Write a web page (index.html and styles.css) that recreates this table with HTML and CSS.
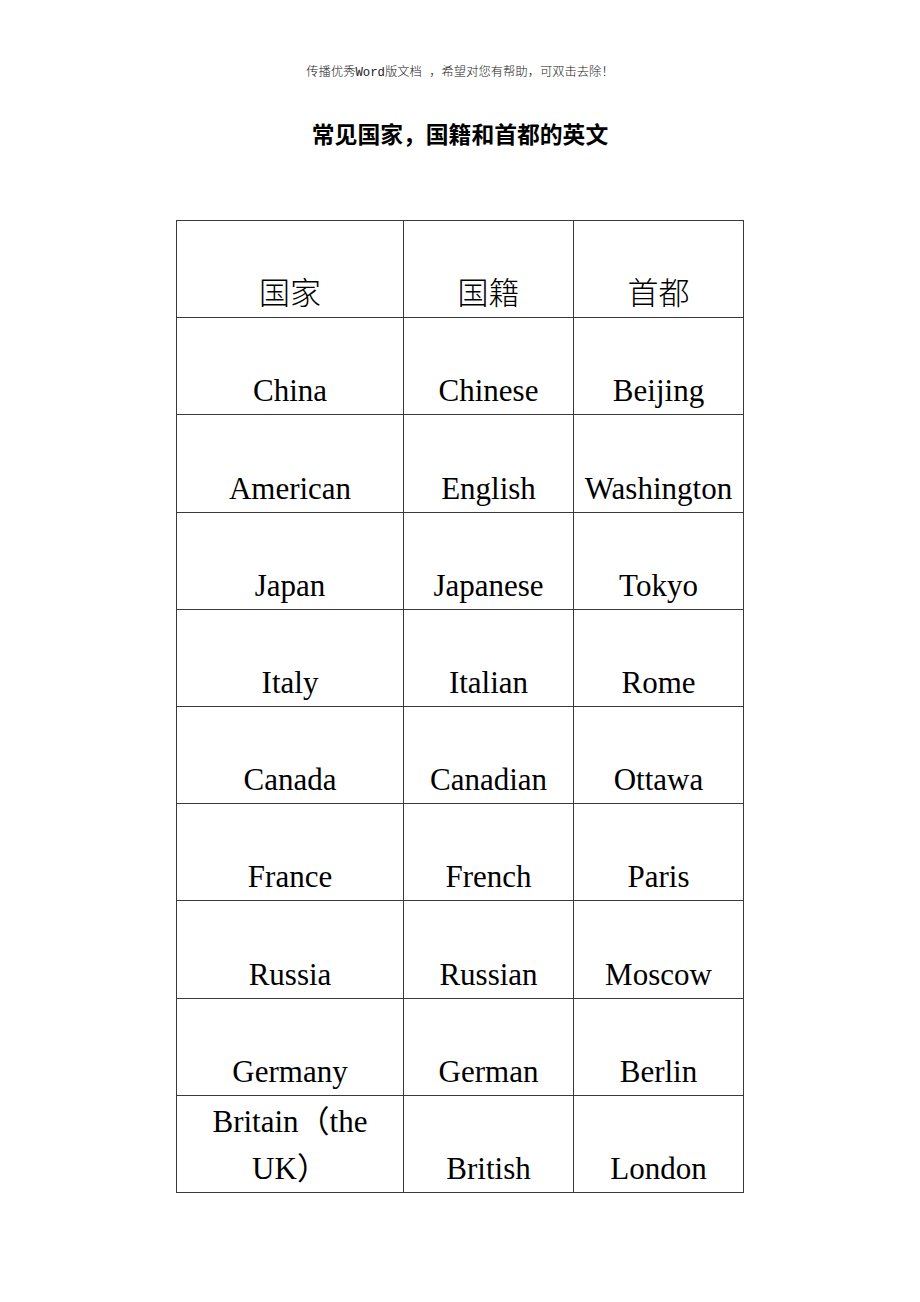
FILE: index.html
```html
<!DOCTYPE html>
<html lang="zh">
<head>
<meta charset="utf-8">
<title>常见国家，国籍和首都的英文</title>
<link rel="stylesheet" href="styles.css">
</head>
<body>
<div class="page">
  <p class="note">传播优秀Word版文档 ，希望对您有帮助，可双击去除！</p>
  <h1 class="title">常见国家，国籍和首都的英文</h1>
  <table class="grid">
    <colgroup>
      <col class="c1"><col class="c2"><col class="c3">
    </colgroup>
    <tbody>
      <tr><td>国家</td><td>国籍</td><td>首都</td></tr>
      <tr><td>China</td><td>Chinese</td><td>Beijing</td></tr>
      <tr><td>American</td><td>English</td><td>Washington</td></tr>
      <tr><td>Japan</td><td>Japanese</td><td>Tokyo</td></tr>
      <tr><td>Italy</td><td>Italian</td><td>Rome</td></tr>
      <tr><td>Canada</td><td>Canadian</td><td>Ottawa</td></tr>
      <tr><td>France</td><td>French</td><td>Paris</td></tr>
      <tr><td>Russia</td><td>Russian</td><td>Moscow</td></tr>
      <tr><td>Germany</td><td>German</td><td>Berlin</td></tr>
      <tr><td>Britain（the UK）</td><td>British</td><td>London</td></tr>
    </tbody>
  </table>
</div>
</body>
</html>
```

FILE: styles.css
```css
html, body {
  margin: 0;
  padding: 0;
  background: #ffffff;
}

.page {
  width: 920px;
  padding-top: 64px;
  color: #000;
}

.note {
  margin: 0;
  text-align: center;
  font-family: "Liberation Mono", "Noto Sans CJK SC", monospace;
  font-weight: 300;
  font-size: 12.3px;
  line-height: 18px;
  color: #222;
}

.title {
  margin: 36px 0 0;
  text-align: center;
  font-family: "Noto Sans CJK SC", sans-serif;
  font-weight: 700;
  font-size: 22.8px;
  line-height: 32px;
}

.grid {
  margin: 70px auto 0;
  border-collapse: collapse;
  width: 568px;
  table-layout: fixed;
  font-family: "Liberation Serif", "Noto Sans CJK SC", serif;
  font-size: 31px;
  line-height: 47px;
}

.c1 { width: 227px; }
.c2 { width: 170px; }
.c3 { width: 170px; }

.grid tr {
  height: 97.2px;
}

.grid td {
  border: 1px solid #3a3a3a;
  padding: 0 5px;
  text-align: center;
  vertical-align: bottom;
}

.grid tr:first-child td {
  font-weight: 300;
}
```
